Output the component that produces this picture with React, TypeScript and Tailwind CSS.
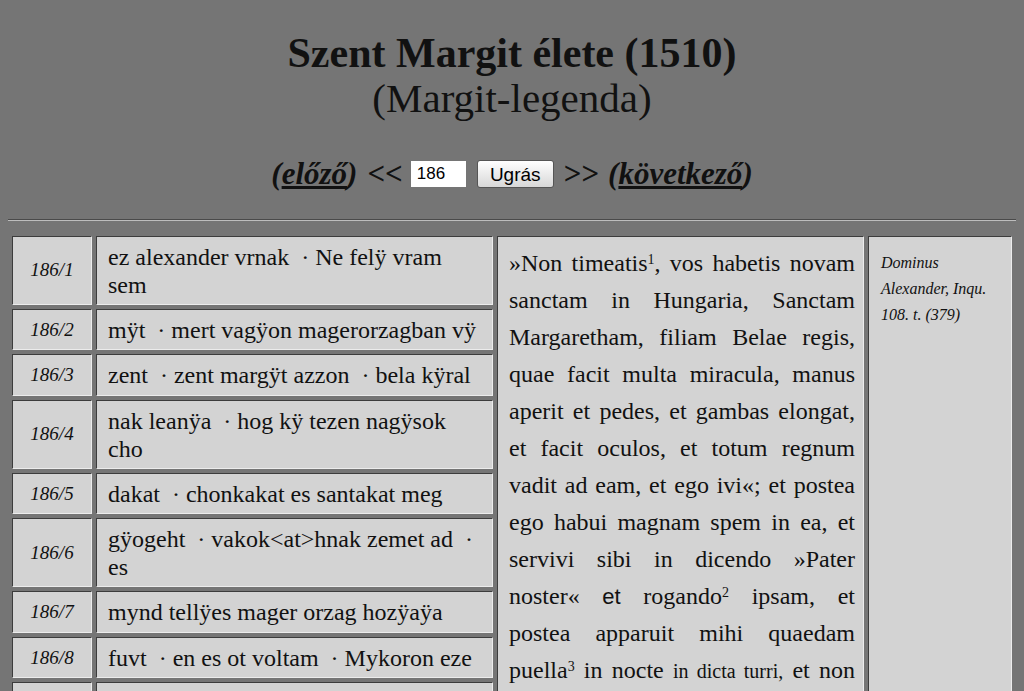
import React from "react";

const rows: { id: string; text: string }[] = [
  { id: "186/1", text: "ez alexander vrnak \u00a0· Ne felÿ vram sem" },
  { id: "186/2", text: "mÿt \u00a0· mert vagÿon magerorzagban vÿ" },
  { id: "186/3", text: "zent \u00a0· zent margÿt azzon \u00a0· bela kÿral" },
  { id: "186/4", text: "nak leanÿa \u00a0· hog kÿ tezen nagÿsok cho" },
  { id: "186/5", text: "dakat \u00a0· chonkakat es santakat meg" },
  { id: "186/6", text: "gÿogeht \u00a0· vakok<at>hnak zemet ad \u00a0· es" },
  { id: "186/7", text: "mynd tellÿes mager orzag hozÿaÿa" },
  { id: "186/8", text: "fuvt \u00a0· en es ot voltam \u00a0· Mykoron eze" },
  { id: "186/9", text: "ket latam \u00a0· nagÿ remensegem leen" },
  { id: "186/10", text: "benne \u00a0· es zolgalek neky" },
];

const cell =
  "bg-[#d3d3d3] border border-t-[#3c3c3c] border-l-[#3c3c3c] border-b-[#ececec] border-r-[#ececec]";

const App = () => {
  return (
    <div className="min-h-[691px] bg-[#757575] px-2 text-[#111] font-['Liberation_Serif']">
      <div className="pt-[31px] text-center">
        <div className="text-[42px] leading-[45px] font-bold">Szent Margit élete (1510)</div>
        <div className="text-[41px] leading-[45px]">(Margit-legenda)</div>
        <div className="mt-[30px] flex items-center justify-center text-[31px] font-bold italic">
          <span>
            (<a className="underline">előző</a>)
          </span>
          <span className="ml-[10px] not-italic">&lt;&lt;</span>
          <input
            defaultValue="186"
            className="ml-[8px] h-[26px] w-[55px] bg-white px-[6px] text-[17px] font-normal not-italic text-black font-['Liberation_Sans'] outline-none"
          />
          <button className="ml-[11px] h-[28px] w-[77px] rounded-[3px] border border-[#555] bg-gradient-to-b from-white to-[#d8d8d8] text-[19px] font-normal not-italic text-black font-['Liberation_Sans'] leading-none">
            Ugrás
          </button>
          <span className="ml-[10px] not-italic">&gt;&gt;</span>
          <span className="ml-[9px]">
            (<a className="underline">következő</a>)
          </span>
        </div>
      </div>
      <div className="mt-[21px] h-[2px] border-t border-b border-t-[#4a4a4a] border-b-[#bdbdbd]" />
      <table className="mt-[11px] w-full border-separate border-spacing-[4px]">
        <tbody>
          {rows.map((r, i) => (
            <tr key={r.id}>
              <td className={`${cell} w-[80px] pt-[6px] pb-[5px] text-center align-middle text-[19px] italic`}>
                {r.id}
              </td>
              <td
                className={`${cell} w-[397px] pt-[6px] pb-[5px] pl-[11px] pr-[8px] text-[24px] leading-[28px] align-middle`}
              >
                {r.text}
              </td>
              {i === 0 && (
                <>
                  <td
                    rowSpan={rows.length}
                    className={`${cell} w-[367px] pl-[11px] pr-[8px] pt-[8px] align-top text-[24px] leading-[37px] text-justify`}
                  >
                    »Non timeatis<sup className="text-[14px]">1</sup>, vos habetis novam sanctam in Hungaria,
                    Sanctam Margaretham, filiam Belae regis, quae facit multa miracula, manus aperit et
                    pedes, et gambas elongat, et facit oculos, et totum regnum vadit ad eam, et ego ivi«;
                    et postea ego habui magnam spem in ea, et servivi sibi in dicendo »Pater noster«{" "}
                    <span className="text-[22px] font-['Liberation_Sans']">et</span> rogando
                    <sup className="text-[14px]">2</sup> ipsam, et postea apparuit mihi quaedam puella
                    <sup className="text-[14px]">3</sup> in nocte{" "}
                    <span className="text-[20px]">in dicta turri,</span> et non cognovi eam.
                  </td>
                  <td
                    rowSpan={rows.length}
                    className={`${cell} pl-[12px] pr-[6px] pt-[13px] align-top text-[16px] leading-[26px] italic`}
                  >
                    Dominus Alexander, Inqu. 108. t. (379)
                  </td>
                </>
              )}
            </tr>
          ))}
        </tbody>
      </table>
    </div>
  );
};

export default App;
